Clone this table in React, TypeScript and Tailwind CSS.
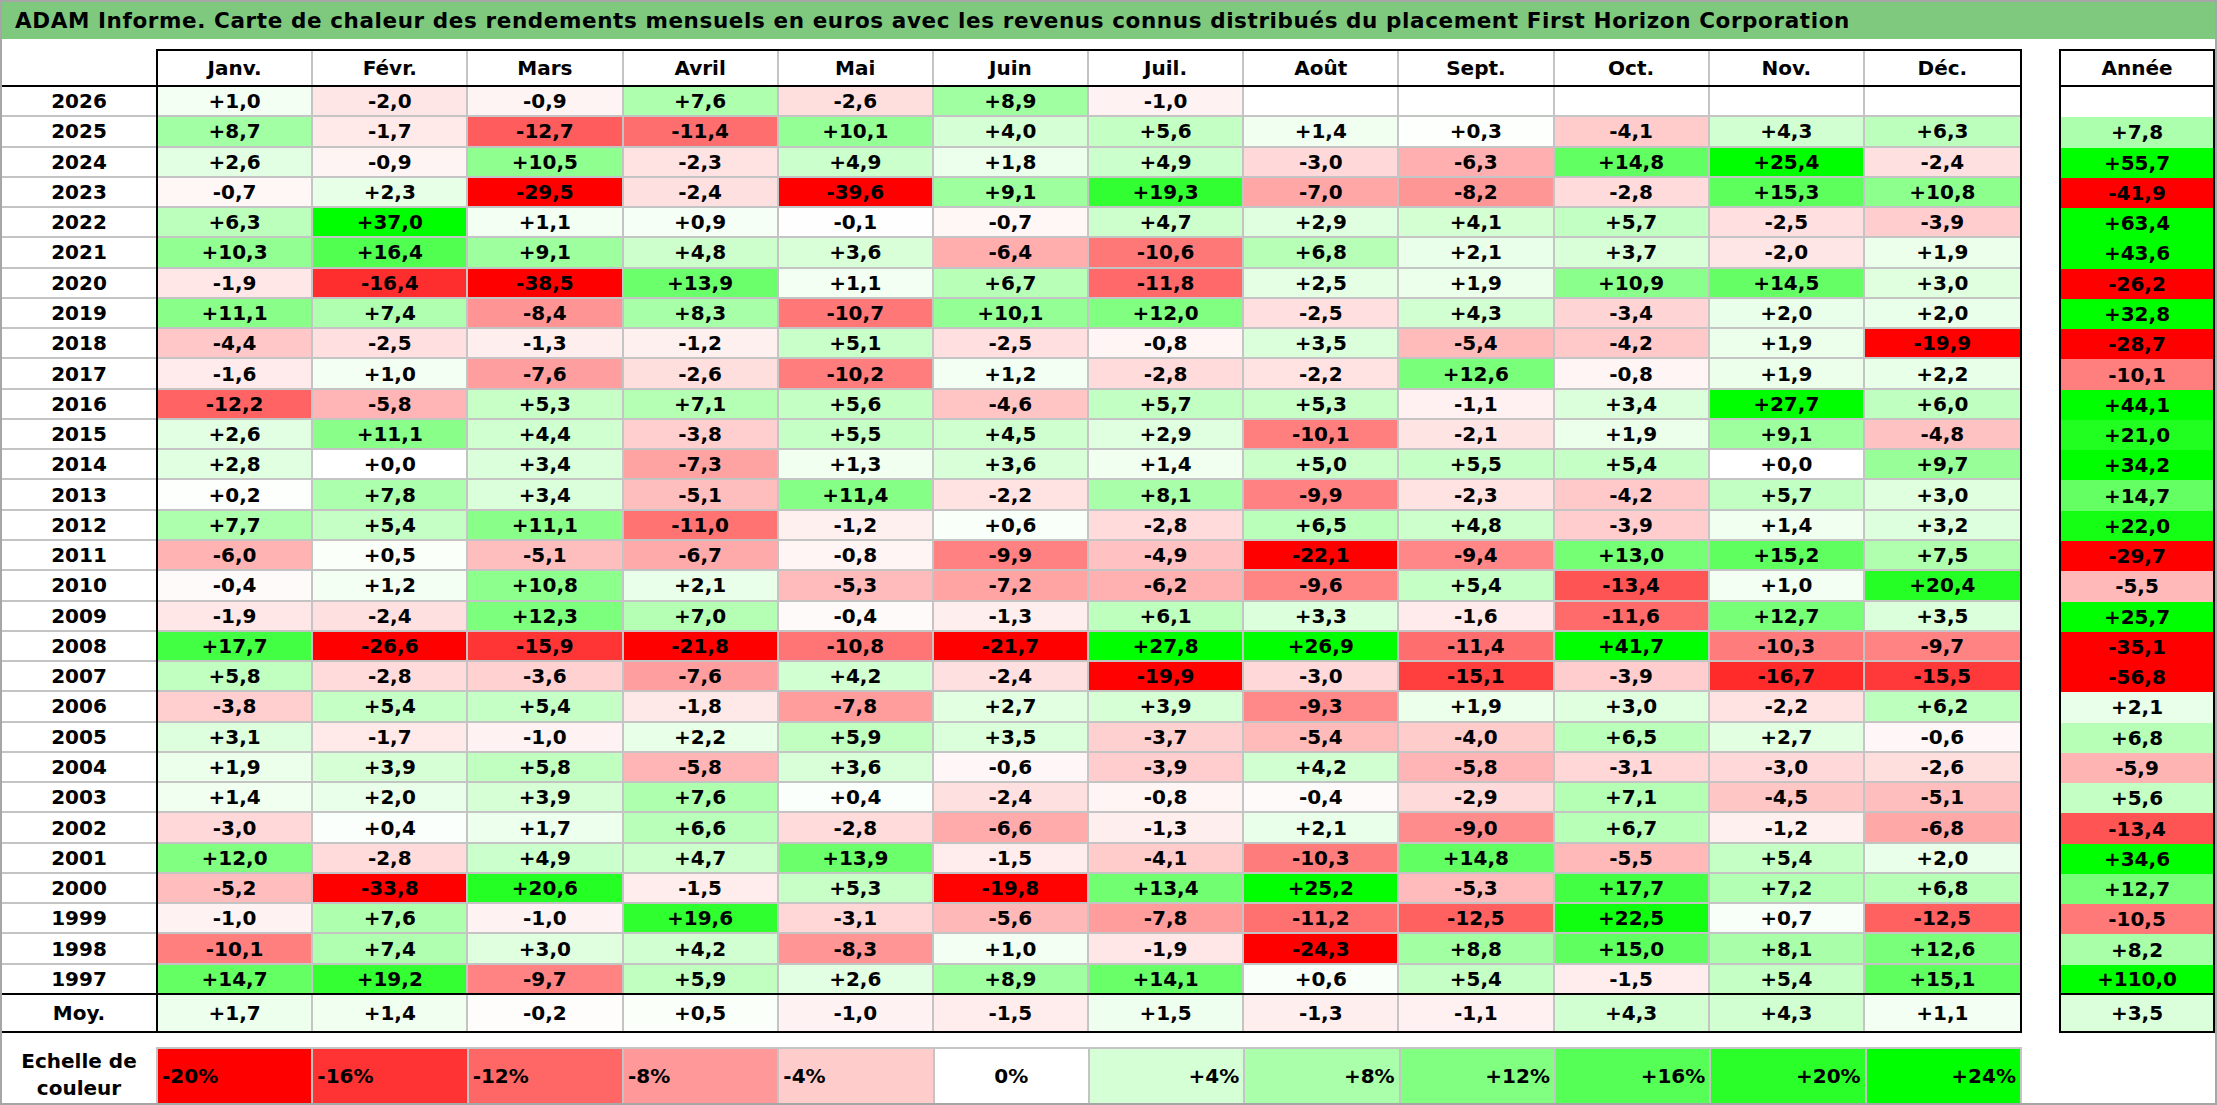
const MONTHS = ['Janv.', 'Févr.', 'Mars', 'Avril', 'Mai', 'Juin', 'Juil.', 'Août', 'Sept.', 'Oct.', 'Nov.', 'Déc.'];

type Row = { year: number; months: (number | null)[]; total: number | null };

const ROWS: Row[] = [
  { year: 2026, months: [1.0, -2.0, -0.9, 7.6, -2.6, 8.9, -1.0, null, null, null, null, null], total: null },
  { year: 2025, months: [8.7, -1.7, -12.7, -11.4, 10.1, 4.0, 5.6, 1.4, 0.3, -4.1, 4.3, 6.3], total: 7.8 },
  { year: 2024, months: [2.6, -0.9, 10.5, -2.3, 4.9, 1.8, 4.9, -3.0, -6.3, 14.8, 25.4, -2.4], total: 55.7 },
  { year: 2023, months: [-0.7, 2.3, -29.5, -2.4, -39.6, 9.1, 19.3, -7.0, -8.2, -2.8, 15.3, 10.8], total: -41.9 },
  { year: 2022, months: [6.3, 37.0, 1.1, 0.9, -0.1, -0.7, 4.7, 2.9, 4.1, 5.7, -2.5, -3.9], total: 63.4 },
  { year: 2021, months: [10.3, 16.4, 9.1, 4.8, 3.6, -6.4, -10.6, 6.8, 2.1, 3.7, -2.0, 1.9], total: 43.6 },
  { year: 2020, months: [-1.9, -16.4, -38.5, 13.9, 1.1, 6.7, -11.8, 2.5, 1.9, 10.9, 14.5, 3.0], total: -26.2 },
  { year: 2019, months: [11.1, 7.4, -8.4, 8.3, -10.7, 10.1, 12.0, -2.5, 4.3, -3.4, 2.0, 2.0], total: 32.8 },
  { year: 2018, months: [-4.4, -2.5, -1.3, -1.2, 5.1, -2.5, -0.8, 3.5, -5.4, -4.2, 1.9, -19.9], total: -28.7 },
  { year: 2017, months: [-1.6, 1.0, -7.6, -2.6, -10.2, 1.2, -2.8, -2.2, 12.6, -0.8, 1.9, 2.2], total: -10.1 },
  { year: 2016, months: [-12.2, -5.8, 5.3, 7.1, 5.6, -4.6, 5.7, 5.3, -1.1, 3.4, 27.7, 6.0], total: 44.1 },
  { year: 2015, months: [2.6, 11.1, 4.4, -3.8, 5.5, 4.5, 2.9, -10.1, -2.1, 1.9, 9.1, -4.8], total: 21.0 },
  { year: 2014, months: [2.8, 0.0, 3.4, -7.3, 1.3, 3.6, 1.4, 5.0, 5.5, 5.4, 0.0, 9.7], total: 34.2 },
  { year: 2013, months: [0.2, 7.8, 3.4, -5.1, 11.4, -2.2, 8.1, -9.9, -2.3, -4.2, 5.7, 3.0], total: 14.7 },
  { year: 2012, months: [7.7, 5.4, 11.1, -11.0, -1.2, 0.6, -2.8, 6.5, 4.8, -3.9, 1.4, 3.2], total: 22.0 },
  { year: 2011, months: [-6.0, 0.5, -5.1, -6.7, -0.8, -9.9, -4.9, -22.1, -9.4, 13.0, 15.2, 7.5], total: -29.7 },
  { year: 2010, months: [-0.4, 1.2, 10.8, 2.1, -5.3, -7.2, -6.2, -9.6, 5.4, -13.4, 1.0, 20.4], total: -5.5 },
  { year: 2009, months: [-1.9, -2.4, 12.3, 7.0, -0.4, -1.3, 6.1, 3.3, -1.6, -11.6, 12.7, 3.5], total: 25.7 },
  { year: 2008, months: [17.7, -26.6, -15.9, -21.8, -10.8, -21.7, 27.8, 26.9, -11.4, 41.7, -10.3, -9.7], total: -35.1 },
  { year: 2007, months: [5.8, -2.8, -3.6, -7.6, 4.2, -2.4, -19.9, -3.0, -15.1, -3.9, -16.7, -15.5], total: -56.8 },
  { year: 2006, months: [-3.8, 5.4, 5.4, -1.8, -7.8, 2.7, 3.9, -9.3, 1.9, 3.0, -2.2, 6.2], total: 2.1 },
  { year: 2005, months: [3.1, -1.7, -1.0, 2.2, 5.9, 3.5, -3.7, -5.4, -4.0, 6.5, 2.7, -0.6], total: 6.8 },
  { year: 2004, months: [1.9, 3.9, 5.8, -5.8, 3.6, -0.6, -3.9, 4.2, -5.8, -3.1, -3.0, -2.6], total: -5.9 },
  { year: 2003, months: [1.4, 2.0, 3.9, 7.6, 0.4, -2.4, -0.8, -0.4, -2.9, 7.1, -4.5, -5.1], total: 5.6 },
  { year: 2002, months: [-3.0, 0.4, 1.7, 6.6, -2.8, -6.6, -1.3, 2.1, -9.0, 6.7, -1.2, -6.8], total: -13.4 },
  { year: 2001, months: [12.0, -2.8, 4.9, 4.7, 13.9, -1.5, -4.1, -10.3, 14.8, -5.5, 5.4, 2.0], total: 34.6 },
  { year: 2000, months: [-5.2, -33.8, 20.6, -1.5, 5.3, -19.8, 13.4, 25.2, -5.3, 17.7, 7.2, 6.8], total: 12.7 },
  { year: 1999, months: [-1.0, 7.6, -1.0, 19.6, -3.1, -5.6, -7.8, -11.2, -12.5, 22.5, 0.7, -12.5], total: -10.5 },
  { year: 1998, months: [-10.1, 7.4, 3.0, 4.2, -8.3, 1.0, -1.9, -24.3, 8.8, 15.0, 8.1, 12.6], total: 8.2 },
  { year: 1997, months: [14.7, 19.2, -9.7, 5.9, 2.6, 8.9, 14.1, 0.6, 5.4, -1.5, 5.4, 15.1], total: 110.0 },
];

const AVERAGE = [1.7, 1.4, -0.2, 0.5, -1.0, -1.5, 1.5, -1.3, -1.1, 4.3, 4.3, 1.1];
const AVERAGE_TOTAL = 3.5;

const SCALE = [-20, -16, -12, -8, -4, 0, 4, 8, 12, 16, 20, 24];

// red down to -20 %, green up to +24 %
function heat(v: number | null) {
  if (v === null) return '#ffffff';
  if (v < 0) {
    const c = Math.round(255 * (1 - Math.min(1, -v / 20)));
    return `rgb(255,${c},${c})`;
  }
  const c = Math.round(255 * (1 - Math.min(1, v / 24)));
  return `rgb(${c},255,${c})`;
}

function fmt(v: number | null) {
  if (v === null) return '';
  return (v >= 0 ? '+' : '') + v.toFixed(1).replace('.', ',');
}

function MonthCells({ values, closed }: { values: (number | null)[]; closed?: boolean }) {
  return (
    <div className={`grid grid-cols-12 w-[1866px] border-x-2 border-black ${closed ? 'border-b-2' : ''}`}>
      {values.map((v, i) => (
        <div
          key={i}
          className={`flex items-center justify-center ${i < 11 ? 'border-r-2 border-r-[#c4c4c4]' : ''} ${
            closed ? '' : 'border-b-2 border-b-[#c4c4c4]'
          }`}
          style={{ backgroundColor: heat(v) }}
        >
          {fmt(v)}
        </div>
      ))}
    </div>
  );
}

export default function App() {
  return (
    <div className="w-[2217px] h-[1105px] border-2 border-[#a6a6a6] bg-white flex flex-col text-black font-bold text-[20px] leading-[22px] font-['DejaVu_Sans',sans-serif]">
      <div className="h-[37px] shrink-0 bg-[#7fc97f] flex items-center pl-[13px] text-[21.5px] tracking-[0.6px] leading-none">
        ADAM Informe. Carte de chaleur des rendements mensuels en euros avec les revenus connus distribués du placement First Horizon Corporation
      </div>

      <div className="h-[10px] shrink-0" />

      {/* header */}
      <div className="flex h-[38px] shrink-0">
        <div className="w-[154px] border-b-2 border-black" />
        <div className="grid grid-cols-12 w-[1866px] border-2 border-black">
          {MONTHS.map((m, i) => (
            <div
              key={m}
              className={`flex items-center justify-center ${i < 11 ? 'border-r-2 border-[#c4c4c4]' : ''}`}
            >
              {m}
            </div>
          ))}
        </div>
        <div className="w-[37px]" />
        <div className="w-[156px] border-2 border-black flex items-center justify-center">Année</div>
      </div>

      {/* years */}
      <div className="flex flex-col h-[908px] shrink-0">
        {ROWS.map((row, idx) => {
          const last = idx === ROWS.length - 1;
          return (
            <div key={row.year} className="flex flex-1 min-h-0">
              <div
                className={`w-[154px] flex items-center justify-center border-b-2 ${
                  last ? 'border-black' : 'border-[#c4c4c4]'
                }`}
              >
                {row.year}
              </div>
              <MonthCells values={row.months} closed={last} />
              <div className="w-[37px]" />
              <div
                className={`w-[156px] border-x-2 border-black flex items-center justify-center ${last ? 'border-b-2' : ''}`}
                style={{ backgroundColor: heat(row.total) }}
              >
                {fmt(row.total)}
              </div>
            </div>
          );
        })}
      </div>

      {/* average */}
      <div className="flex h-[38px] shrink-0">
        <div className="w-[154px] border-b-2 border-black flex items-center justify-center">Moy.</div>
        <MonthCells values={AVERAGE} closed />
        <div className="w-[37px]" />
        <div
          className="w-[156px] border-x-2 border-b-2 border-black flex items-center justify-center"
          style={{ backgroundColor: heat(AVERAGE_TOTAL) }}
        >
          {fmt(AVERAGE_TOTAL)}
        </div>
      </div>

      <div className="h-[14px] shrink-0" />

      {/* colour scale */}
      <div className="flex flex-1 min-h-0">
        <div className="w-[154px] flex items-center justify-center text-center leading-[27px]">
          Echelle de
          <br />
          couleur
        </div>
        <div className="grid grid-cols-12 w-[1866px] border-l-2 border-t-2 border-[#c4c4c4]">
          {SCALE.map((s) => (
            <div
              key={s}
              className={`flex items-center border-r-2 border-[#c4c4c4] ${
                s < 0 ? 'justify-start pl-[4px]' : s === 0 ? 'justify-center' : 'justify-end pr-[4px]'
              }`}
              style={{ backgroundColor: heat(s) }}
            >
              {s > 0 ? '+' : ''}
              {s}%
            </div>
          ))}
        </div>
      </div>
    </div>
  );
}
